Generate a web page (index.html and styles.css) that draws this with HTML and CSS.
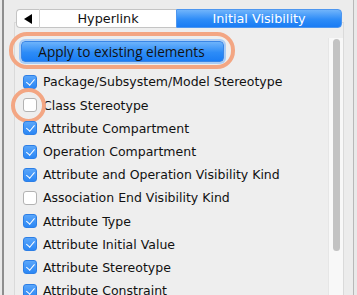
FILE: index.html
```html
<!DOCTYPE html>
<html>
<head>
<meta charset="utf-8">
<link rel="stylesheet" href="styles.css">
</head>
<body>
<div class="window">
  <div class="inner">
    <div class="tabs">
      <div class="tab arrow"><svg width="10" height="12" viewBox="0 0 10 12"><path d="M1 6 L9 1 L9 11 Z" fill="#000"/></svg></div>
      <div class="tab hyper">Hyperlink</div>
      <div class="tab active">Initial Visibility</div>
    </div>
    <div class="panel">
      <div class="content">
        <div class="btnwrap">
          <div class="apply">Apply to existing elements</div>
          <div class="ring-btn"></div>
        </div>
        <ul class="list">
          <li><span class="cb on"></span>Package/Subsystem/Model Stereotype</li>
          <li class="ringed"><span class="cb"></span><span class="ring-cb"></span>Class Stereotype</li>
          <li><span class="cb on"></span>Attribute Compartment</li>
          <li><span class="cb on"></span>Operation Compartment</li>
          <li><span class="cb on"></span>Attribute and Operation Visibility Kind</li>
          <li><span class="cb"></span>Association End Visibility Kind</li>
          <li><span class="cb on"></span>Attribute Type</li>
          <li><span class="cb on"></span>Attribute Initial Value</li>
          <li><span class="cb on"></span>Attribute Stereotype</li>
          <li><span class="cb on"></span>Attribute Constraint</li>
        </ul>
      </div>
      <div class="scroll"><div class="thumb"></div></div>
    </div>
  </div>
</div>
</body>
</html>
```
FILE: styles.css
```css
html, body {
  margin: 0;
  padding: 0;
  background: #ececec;
  font-family: "DejaVu Sans", "Liberation Sans", sans-serif;
  font-size: 12.5px;
  color: #111;
  overflow: hidden;
}
.window {
  width: 357px;
  height: 295px;
  display: flex;
  background: #e9e9e9;
}
.inner {
  margin-left: 2px;
  border-left: 2px solid #8e8e8e;
  border-right: 1px solid #b8b8b8;
  width: 352px;
  background: #ececec;
  padding: 9px 0 0 10px;
  box-sizing: border-box;
  height: 295px;
  display: flex;
  flex-direction: column;
}
.tabs {
  display: flex;
  height: 19px;
  margin-left: 2px;
  position: relative;
  z-index: 2;
}
.tab {
  height: 19px;
  box-sizing: border-box;
  display: flex;
  align-items: center;
  justify-content: center;
  font-size: 12.8px;
}
.arrow {
  width: 24px;
  background: #fff;
  border: 1px solid #c4c4c4;
  border-right: 1px solid #d4d4d4;
  border-radius: 4px 0 0 4px;
}
.hyper {
  width: 136px;
  background: #fff;
  border-top: 1px solid #c4c4c4;
  border-bottom: 1px solid #c4c4c4;
}
.active {
  width: 166px;
  color: #fff;
  background: linear-gradient(#70b4fb, #2e8cf7 55%, #1a7cf4);
  border-radius: 0 4px 4px 0;
  border: 1px solid #4d96ef;
}
.panel {
  margin-top: -6px;
  width: 330px;
  flex: 1;
  background: #eeeeee;
  border: 1px solid #dadada;
  border-bottom: none;
  box-sizing: border-box;
  display: flex;
  padding-top: 9px;
}
.content {
  flex: 1;
  padding: 9px 0 0 6px;
}
.btnwrap {
  position: relative;
  width: 203px;
  height: 21px;
}
.apply {
  width: 203px;
  height: 21px;
  box-sizing: border-box;
  border-radius: 4px;
  background: linear-gradient(#6db3fb, #2d8cf7 55%, #1b7df4);
  border: 1px solid #3a86e6;
  box-shadow: 0 0 0 2px #a9cdf6;
  color: #111;
  font-family: "Open Sans", "DejaVu Sans", sans-serif;
  font-size: 13.6px;
  display: flex;
  align-items: center;
  justify-content: center;
  padding-right: 2px;
}
.ring-btn {
  position: absolute;
  left: -12px;
  top: -9px;
  width: 226px;
  height: 37px;
  box-sizing: border-box;
  border: 4px solid #f3a683;
  border-radius: 18px;
}
.list {
  list-style: none;
  margin: 8.4px 0 0 0;
  padding: 0;
}
.list li {
  height: 23.2px;
  display: flex;
  align-items: center;
  position: relative;
  white-space: nowrap;
}
.cb {
  width: 14px;
  height: 14px;
  box-sizing: border-box;
  border-radius: 3px;
  background: #fff;
  border: 1px solid #b3b3b3;
  margin-left: 2px;
  margin-right: 6px;
  flex: none;
  position: relative;
}
.cb.on {
  background: linear-gradient(#5aa6fa, #2b87f5);
  border: 1px solid #2d7fe6;
}
.cb.on::after {
  content: "";
  position: absolute;
  left: 3.5px;
  top: 1px;
  width: 3.5px;
  height: 7px;
  border-right: 1.8px solid #fff;
  border-bottom: 1.8px solid #fff;
  transform: rotate(40deg);
}
.ring-cb {
  position: absolute;
  left: -10px;
  top: 50%;
  width: 35px;
  height: 35px;
  margin-top: -17.5px;
  box-sizing: border-box;
  border: 4px solid #f3a683;
  border-radius: 50%;
}
.scroll {
  width: 15px;
  background: #f8f8f8;
  border-left: 1px solid #e6e6e6;
  margin-top: 6px;
  padding: 1px 3px 0 4px;
  box-sizing: border-box;
}
.thumb {
  height: 212px;
  background: #c2c2c2;
  border-radius: 4px;
}
```
